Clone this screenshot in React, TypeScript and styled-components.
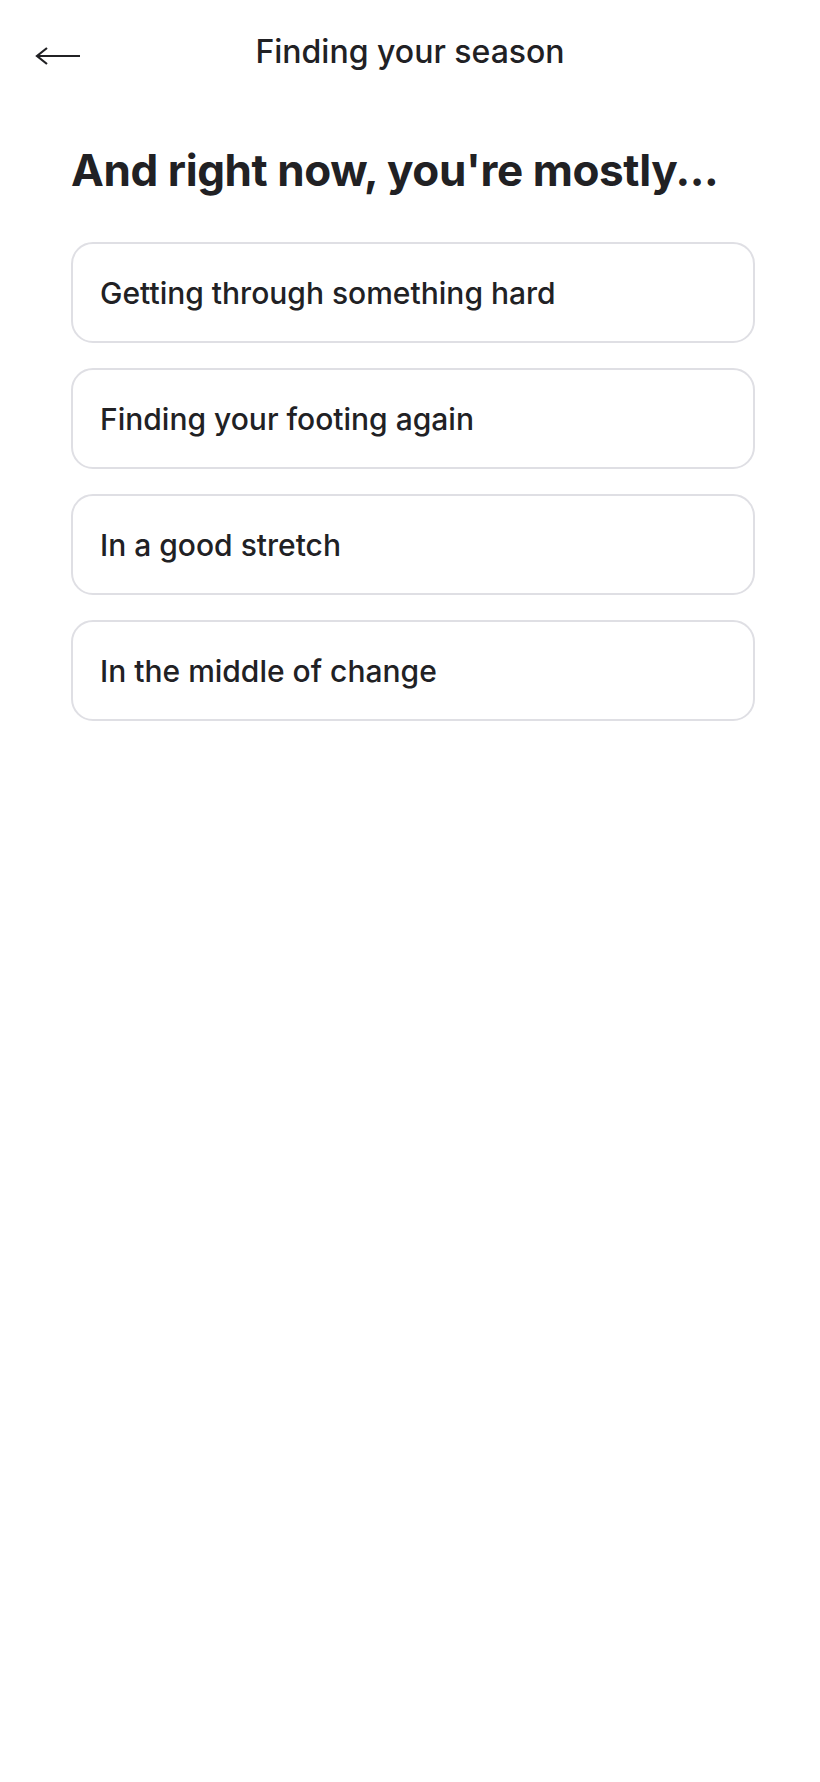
import React from 'react';
import styled, { createGlobalStyle } from 'styled-components';

const options = [
	'Getting through something hard',
	'Finding your footing again',
	'In a good stretch',
	'In the middle of change',
];

const GlobalStyle = createGlobalStyle`
	html, body {
		margin: 0;
		padding: 0;
		background: #ffffff;
	}
	body {
		font-family: Inter, 'Noto Sans', sans-serif;
		color: #212124;
		-webkit-font-smoothing: antialiased;
	}
`;

export default function App() {
	return (
		<>
			<GlobalStyle />
			<Screen>
				<Header>
					<BackButton aria-label="Back">
						<svg width="46" height="20" viewBox="0 0 46 20" fill="none">
							<path d="M2 10H45" stroke="#212124" strokeWidth="2.2" />
							<path d="M12 2L2 10L12 18" stroke="#212124" strokeWidth="2.2" strokeLinejoin="miter" />
						</svg>
					</BackButton>
					<Title>Finding your season</Title>
					<span />
				</Header>
				<Content>
					<Question>And right now, you're mostly...</Question>
					<OptionList>
						{options.map((label) => (
							<Option key={label}>{label}</Option>
						))}
					</OptionList>
				</Content>
			</Screen>
		</>
	);
}

const Screen = styled.div`
	min-height: 1782px;
	background: #ffffff;
`;

const Header = styled.header`
	display: grid;
	grid-template-columns: 1fr auto 1fr;
	align-items: center;
	height: 100px;
	padding: 4px 35px 0;
	box-sizing: border-box;
`;

const BackButton = styled.button`
	justify-self: start;
	display: flex;
	align-items: center;
	margin-top: 8px;
	padding: 0;
	border: none;
	background: none;
	cursor: pointer;
`;

const Title = styled.h1`
	margin: 0;
	font-size: 32px;
	font-weight: 500;
	line-height: 38px;
	color: #212124;
`;

const Content = styled.main`
	padding: 44px 65px 0 71px;
`;

const Question = styled.h2`
	margin: 0 0 45px;
	font-size: 44px;
	font-weight: 700;
	line-height: 53px;
	letter-spacing: -0.009em;
	color: #212124;
`;

const OptionList = styled.div`
	display: flex;
	flex-direction: column;
	gap: 25px;
`;

const Option = styled.button`
	display: flex;
	align-items: center;
	height: 101px;
	padding: 0 27px;
	border: 2px solid #dfdfe4;
	border-radius: 22px;
	background: #ffffff;
	font-family: inherit;
	font-size: 30px;
	font-weight: 500;
	color: #212124;
	text-align: left;
	cursor: pointer;
`;
